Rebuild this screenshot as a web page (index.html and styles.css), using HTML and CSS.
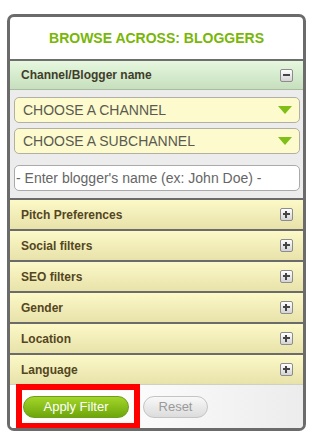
FILE: index.html
```html
<!DOCTYPE html>
<html lang="en">
  <head>
    <meta charset="UTF-8" />
    <meta name="viewport" content="width=device-width, initial-scale=1.0" />
    <title>Browse Across Bloggers</title>
    <link rel="stylesheet" href="styles.css">
  </head>
  <body>
    <div class="panel">
      <h2 class="panel-title">BROWSE ACROSS: BLOGGERS</h2>

      <div class="head head-open">
        <span>Channel/Blogger name</span>
        <span class="toggle"></span>
      </div>
      <div class="head-body">
        <div class="select">
          <span>CHOOSE A CHANNEL</span>
          <span class="arrow"></span>
        </div>
        <div class="select">
          <span>CHOOSE A SUBCHANNEL</span>
          <span class="arrow"></span>
        </div>
        <input type="text" class="name-input" placeholder="- Enter blogger's name (ex: John Doe) -" />
      </div>

      <div class="head"><span>Pitch Preferences</span><span class="toggle plus"></span></div>
      <div class="head"><span>Social filters</span><span class="toggle plus"></span></div>
      <div class="head"><span>SEO filters</span><span class="toggle plus"></span></div>
      <div class="head"><span>Gender</span><span class="toggle plus"></span></div>
      <div class="head"><span>Location</span><span class="toggle plus"></span></div>
      <div class="head"><span>Language</span><span class="toggle plus"></span></div>

      <div class="panel-foot">
        <button class="btn btn-apply">Apply Filter</button>
        <button class="btn btn-reset">Reset</button>
        <div class="mark"></div>
      </div>
    </div>
  </body>
</html>
```

FILE: styles.css
```css
body {
  margin: 0;
  font-family: "Liberation Sans", Arial, sans-serif;
  background: #fff;
}
.panel {
  width: 293px;
  margin: 14px 0 0 7px;
  border: 3px solid #6b6b6b;
  border-radius: 7px;
  overflow: hidden;
  background: #fff;
}
.panel-title {
  height: 42px;
  margin: 0;
  display: flex;
  align-items: center;
  justify-content: center;
  font-size: 14px;
  font-weight: bold;
  color: #78b608;
  border-bottom: 2px solid #6e6e6e;
}
.head {
  height: 29px;
  border-top: 2px solid #6b6b6b;
  padding: 0 10px 0 11px;
  display: flex;
  align-items: center;
  justify-content: space-between;
  font-size: 12px;
  font-weight: bold;
  color: #54461f;
  background: linear-gradient(#fcf9c8, #e8e2aa);
}
.head-open {
  height: 28px;
  border-top: none;
  border-bottom: 1px solid #a9bba1;
  color: #3f3d2a;
  background: linear-gradient(#e6f8df, #c6dfbd);
}
.head-body {
  height: 108px;
  box-sizing: border-box;
  padding: 7px 3px 0 4px;
  background: #ececec;
}
.select {
  height: 26px;
  box-sizing: border-box;
  margin-bottom: 5px;
  padding: 0 7px 0 8px;
  display: flex;
  align-items: center;
  justify-content: space-between;
  border: 1px solid #b2b0a2;
  border-radius: 5px;
  background: #fdfbcd;
  font-size: 14px;
  color: #5a5a50;
}
.arrow {
  width: 0;
  height: 0;
  border-left: 7px solid transparent;
  border-right: 7px solid transparent;
  border-top: 8px solid #80be18;
}
.name-input {
  display: block;
  width: 100%;
  height: 26px;
  box-sizing: border-box;
  margin-top: 11px;
  padding: 0 0 0 1px;
  border: 1px solid #aaa;
  border-radius: 5px;
  background: #fff;
  font-family: "Liberation Sans", Arial, sans-serif;
  font-size: 14px;
  outline: none;
}
.name-input::placeholder {
  color: #666;
  opacity: 1;
}
.toggle {
  position: relative;
  width: 11px;
  height: 11px;
  border: 1px solid #8c8c8c;
  border-radius: 2px;
  background: linear-gradient(#ffffff, #d4d4d4);
}
.toggle::before,
.toggle.plus::after {
  content: "";
  position: absolute;
  background: #454545;
}
.toggle::before {
  left: 2px;
  top: 4px;
  width: 7px;
  height: 2px;
}
.toggle.plus::after {
  left: 4px;
  top: 2px;
  width: 2px;
  height: 7px;
}
.panel-foot {
  position: relative;
  height: 43px;
  border-top: 1px solid #d0d0c0;
  padding-left: 13px;
  display: flex;
  align-items: center;
  gap: 14px;
  background: linear-gradient(90deg, #ffffff 30%, #ececec);
}
.btn {
  height: 22px;
  border-radius: 11px;
  font-family: "Liberation Sans", Arial, sans-serif;
  font-size: 13px;
  padding: 0;
  cursor: pointer;
}
.btn-apply {
  width: 106px;
  border: 1px solid #6d9f18;
  background: linear-gradient(#a3d62a, #6ea60c);
  color: #fff;
}
.btn-reset {
  width: 65px;
  border: 1px solid #c4c4c4;
  background: linear-gradient(#f8f8f8, #dcdcdc);
  color: #9a9a9a;
}
.mark {
  position: absolute;
  left: 6px;
  top: -1px;
  width: 112px;
  height: 33px;
  border: 6px solid #f00;
}
```
